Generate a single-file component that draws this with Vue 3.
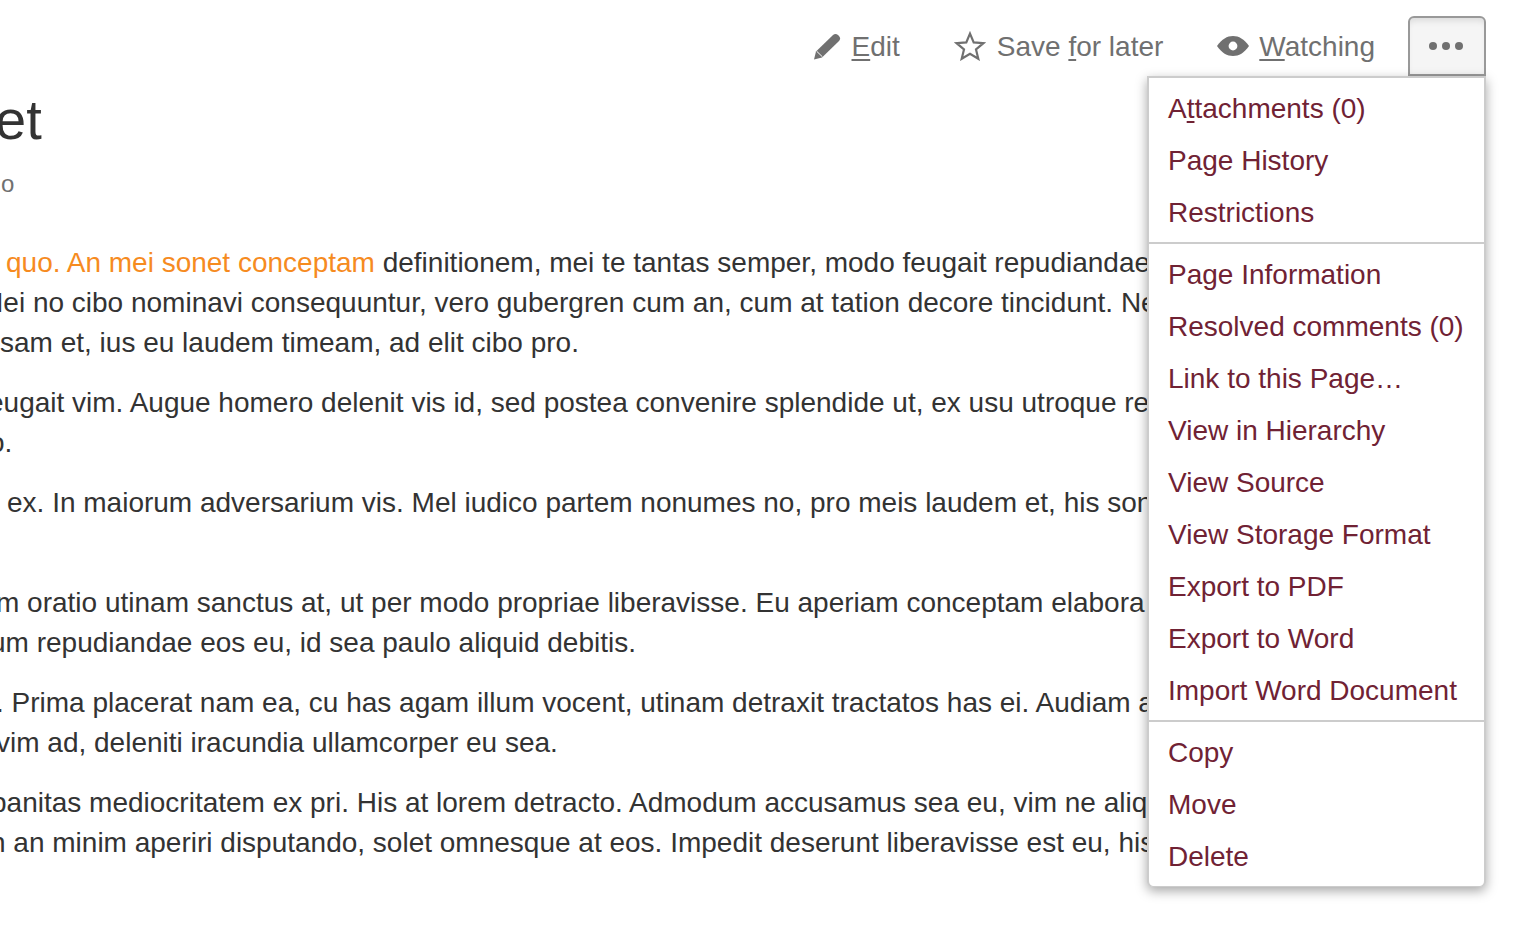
<script setup>
const paragraphs = [
  [
    { x: 6, parts: [{ t: 'quo. An mei sonet conceptam', link: true }, { t: ' definitionem, mei te tantas semper, modo feugait repudiandae ne sit' }] },
    { x: -20, parts: [{ t: 'Mei no cibo nominavi consequuntur, vero gubergren cum an, cum at tation decore tincidunt. Ne vel' }] },
    { x: 0, parts: [{ t: 'sam et, ius eu laudem timeam, ad elit cibo pro.' }] }
  ],
  [
    { x: -12, parts: [{ t: 'eugait vim. Augue homero delenit vis id, sed postea convenire splendide ut, ex usu utroque recusabo' }] },
    { x: -11, parts: [{ t: 'o.' }] }
  ],
  [
    { x: 7, parts: [{ t: 'ex. In maiorum adversarium vis. Mel iudico partem nonumes no, pro meis laudem et, his sonet' }] },
    { x: 0, parts: [{ t: '\u00a0' }] }
  ],
  [
    { x: -4, parts: [{ t: 'm oratio utinam sanctus at, ut per modo propriae liberavisse. Eu aperiam conceptam elabora' }] },
    { x: -10, parts: [{ t: 'um repudiandae eos eu, id sea paulo aliquid debitis.' }] }
  ],
  [
    { x: -4, parts: [{ t: '. Prima placerat nam ea, cu has agam illum vocent, utinam detraxit tractatos has ei. Audiam at' }] },
    { x: -4, parts: [{ t: 'vim ad, deleniti iracundia ullamcorper eu sea.' }] }
  ],
  [
    { x: -9, parts: [{ t: 'panitas mediocritatem ex pri. His at lorem detracto. Admodum accusamus sea eu, vim ne aliquam' }] },
    { x: -10, parts: [{ t: 'n an minim aperiri disputando, solet omnesque at eos. Impedit deserunt liberavisse est eu, his at' }] }
  ]
]

const menuGroups = [
  ['Page History', 'Restrictions'],
  ['Page Information', 'Resolved comments (0)', 'Link to this Page…', 'View in Hierarchy', 'View Source', 'View Storage Format', 'Export to PDF', 'Export to Word', 'Import Word Document'],
  ['Copy', 'Move', 'Delete']
]
</script>

<template>
  <div class="page">
    <header class="toolbar">
      <a class="tool">
        <svg class="ico-edit" width="28" height="30" viewBox="0 0 28 30">
          <path d="M1 28.5 L3 20.5 L20 4 Q22.5 1.8 25 4 L26 5 Q28.2 7.6 26 10 L9 26.5 Z" fill="#707070" />
          <path d="M3.6 20.2 L9.4 25.8" stroke="#fff" stroke-width="1" fill="none" />
        </svg>
        <span><u>E</u>dit</span>
      </a>
      <a class="tool">
        <svg class="ico-star" width="32" height="30" viewBox="0 0 32 30">
          <path d="M16 2.6 L19.7 11.4 L29.4 12.2 L22 18.4 L24.3 27.8 L16 22.8 L7.7 27.8 L10 18.4 L2.6 12.2 L12.3 11.4 Z" fill="none" stroke="#707070" stroke-width="2.2" stroke-linejoin="miter" />
        </svg>
        <span>Save <u>f</u>or later</span>
      </a>
      <a class="tool tool-watch">
        <svg class="ico-eye" width="32" height="22" viewBox="0 0 32 22">
          <path d="M0 11 C5 4 10 1 16 1 C22 1 27 4 32 11 C27 18 22 21 16 21 C10 21 5 18 0 11 Z" fill="#707070" />
          <circle cx="16" cy="11" r="4.4" fill="#fff" />
        </svg>
        <span><u>W</u>atching</span>
      </a>
      <button class="more" type="button" aria-label="More">
        <i></i><i></i><i></i>
      </button>
    </header>

    <main class="content">
      <h1 class="title">et</h1>
      <div class="meta">o</div>
      <div class="body">
        <p v-for="(para, i) in paragraphs" :key="i">
          <span
            v-for="(line, j) in para"
            :key="j"
            class="line"
            :style="{ marginLeft: line.x + 'px' }"
          ><template v-for="(part, k) in line.parts" :key="k"><a v-if="part.link" class="link">{{ part.t }}</a><template v-else>{{ part.t }}</template></template></span>
        </p>
      </div>
    </main>

    <nav class="menu">
      <ul>
        <li>A<u>t</u>tachments (0)</li>
        <li v-for="item in menuGroups[0]" :key="item">{{ item }}</li>
      </ul>
      <ul>
        <li v-for="item in menuGroups[1]" :key="item">{{ item }}</li>
      </ul>
      <ul>
        <li v-for="item in menuGroups[2]" :key="item">{{ item }}</li>
      </ul>
    </nav>
  </div>
</template>

<style>
html, body { margin: 0; background: #fff; overflow: hidden; }
</style>

<style scoped>
.page {
  position: relative;
  width: 1538px;
  height: 926px;
  overflow: hidden;
  background: #fff;
  font-family: "Liberation Sans", Arial, sans-serif;
  font-size: 28px;
  line-height: 40px;
  color: #333;
}
.toolbar {
  display: flex;
  justify-content: flex-end;
  align-items: center;
  height: 60px;
  padding: 16px 52px 0 0;
}
.tool {
  display: flex;
  align-items: center;
  gap: 11px;
  margin-right: 54px;
  color: #707070;
}
.tool-watch { gap: 10px; margin-right: 33px; }
.tool span { padding-top: 2px; }
.tool u { text-decoration-thickness: 2px; text-underline-offset: 3px; }
.more {
  display: flex;
  align-items: center;
  justify-content: center;
  gap: 5px;
  box-sizing: border-box;
  width: 78px;
  height: 60px;
  padding: 0 2px 0 0;
  border: 2px solid #999;
  border-radius: 6px 6px 0 0;
  background: #f5f5f5;
  box-shadow: inset 0 6px 6px -3px rgba(0, 0, 0, .1);
}
.more i {
  width: 8px;
  height: 8px;
  border-radius: 50%;
  background: #707070;
}
.content { overflow: hidden; }
.title {
  margin: 14px 0 0 -5px;
  font-size: 56px;
  font-weight: 400;
  line-height: 60px;
  color: #333;
}
.meta {
  margin-top: 14px;
  padding-left: 1px;
  font-size: 24px;
  line-height: 40px;
  color: #707070;
}
.body { margin-top: 39px; }
.body p { margin: 0 0 20px; }
.line {
  display: block;
  white-space: nowrap;
}
.link { color: #f68b1f; }
.menu {
  position: absolute;
  top: 76px;
  left: 1147px;
  width: 339px;
  box-sizing: border-box;
  border: 2px solid #ccc;
  border-bottom-width: 1px;
  border-radius: 0 0 6px 6px;
  background: #fff;
  box-shadow: 0 4px 12px rgba(0, 0, 0, .35);
  color: #702234;
}
.menu ul {
  margin: 0;
  padding: 4px 0;
  list-style: none;
}
.menu ul + ul { border-top: 2px solid #ccc; }
.menu li {
  height: 52px;
  padding: 0 19px;
  line-height: 54px;
  white-space: nowrap;
}
.menu u { text-decoration-thickness: 2px; text-underline-offset: 3px; }
</style>
